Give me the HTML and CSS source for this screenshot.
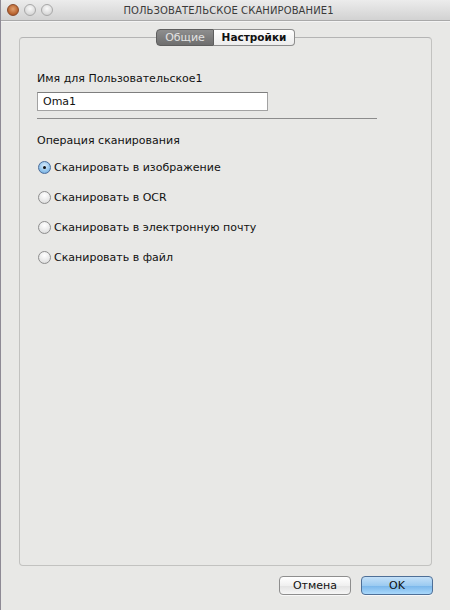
FILE: index.html
```html
<!DOCTYPE html>
<html lang="ru">
<head>
  <meta charset="UTF-8">
  <title>ПОЛЬЗОВАТЕЛЬСКОЕ СКАНИРОВАНИЕ1</title>
  <link rel="stylesheet" href="styles.css">
</head>
<body>
  <div class="window">
    <div class="titlebar">
      <div class="lights">
        <span class="light close"></span>
        <span class="light"></span>
        <span class="light"></span>
      </div>
      <div class="title">ПОЛЬЗОВАТЕЛЬСКОЕ СКАНИРОВАНИЕ1</div>
    </div>

    <div class="content">
      <div class="tabs">
        <span class="tab active">Общие</span>
        <span class="tab">Настройки</span>
      </div>

      <div class="panel">
        <div class="label">Имя для Пользовательское1</div>
        <div class="field">Oma1</div>
        <div class="sep"></div>

        <div class="label group">Операция сканирования</div>
        <div class="radios">
          <div class="radio-row"><span class="radio checked"></span>Сканировать в изображение</div>
          <div class="radio-row"><span class="radio"></span>Сканировать в OCR</div>
          <div class="radio-row"><span class="radio"></span>Сканировать в электронную почту</div>
          <div class="radio-row"><span class="radio"></span>Сканировать в файл</div>
        </div>
      </div>

      <div class="buttons">
        <button class="btn">Отмена</button>
        <button class="btn primary">OK</button>
      </div>
    </div>
  </div>
</body>
</html>
```

FILE: styles.css
```css
html, body {
  margin: 0;
  padding: 0;
}
body {
  font-family: "DejaVu Sans", Verdana, sans-serif;
  font-size: 11px;
  color: #111;
  background: #e8e8e6;
}
.window {
  width: 450px;
  height: 610px;
  box-sizing: border-box;
  border-left: 1px solid #8e8a95;
  background: #e8e8e6;
  display: flex;
  flex-direction: column;
}
.titlebar {
  height: 20px;
  flex: none;
  display: flex;
  align-items: center;
  background: linear-gradient(#ececec, #d2d2d2);
  border-bottom: 1px solid #a9a9a9;
  box-shadow: 0 1px 0 #f4f4f4;
}
.lights {
  display: flex;
  gap: 5px;
  padding-left: 6px;
  width: 100px;
}
.light {
  width: 12px;
  height: 12px;
  border-radius: 50%;
  box-sizing: border-box;
  border: 1px solid #a8a8a8;
  background: radial-gradient(circle at 50% 35%, #fafafa, #d8d8d8 70%, #c4c4c4);
}
.light.close {
  border-color: #8a4a2a;
  background: radial-gradient(circle at 50% 40%, #e0a070, #b8632f 65%, #8e4320);
}
.title {
  flex: 1;
  text-align: center;
  margin-left: -106px;
  padding-left: 6px;
  font-size: 10px;
  color: #3a3a3a;
  letter-spacing: 0.1px;
}
.content {
  flex: 1;
  display: flex;
  flex-direction: column;
  padding: 8px 17px 0 17px;
}
.tabs {
  display: flex;
  justify-content: center;
  margin-bottom: -9px;
  position: relative;
  z-index: 1;
}
.tab {
  height: 17px;
  line-height: 15px;
  box-sizing: border-box;
  border: 1px solid #8d8d8d;
  background: linear-gradient(#ffffff, #ececec);
  font-weight: bold;
  font-size: 10.5px;
  color: #111;
  text-align: center;
}
.tab:first-child {
  border-radius: 4px 0 0 4px;
}
.tab:last-child {
  border-radius: 0 4px 4px 0;
  border-left: none;
  width: 81px;
}
.tab.active {
  background: linear-gradient(#8e8e8e, #6e6e6e);
  border-color: #5e5e5e;
  color: #e2e2e2;
  font-weight: normal;
  font-size: 11px;
  width: 58px;
}
.panel {
  height: 529px;
  box-sizing: border-box;
  margin-left: 1px;
  margin-right: 1px;
  border: 1px solid #c2c2c0;
  border-top-color: #b4b4b4;
  border-radius: 4px;
  padding: 34px 17px 0 17px;
}
.label {
  line-height: 14px;
}
.field {
  margin-top: 6px;
  width: 231px;
  height: 19px;
  box-sizing: border-box;
  border: 1px solid #a2a2a2;
  border-top-color: #7e7e7e;
  background: #fff;
  padding-left: 5px;
  line-height: 17px;
}
.sep {
  margin-top: 7px;
  width: 340px;
  height: 1px;
  background: #8c8c8c;
}
.label.group {
  margin-top: 15px;
}
.radios {
  margin-top: 12px;
  display: flex;
  flex-direction: column;
  gap: 16px;
}
.radio-row {
  height: 14px;
  display: flex;
  align-items: center;
  margin-left: 1px;
}
.radio {
  width: 13px;
  height: 13px;
  box-sizing: border-box;
  border-radius: 50%;
  border: 1px solid #8e8e8e;
  background: radial-gradient(circle at 50% 30%, #ffffff, #e4e4e4 70%, #cfcfcf);
  margin-right: 3px;
  position: relative;
}
.radio.checked {
  border-color: #4a6c9a;
  background: radial-gradient(circle at 50% 35%, #d8ecfb, #8cbfe9 65%, #5e9ad6);
}
.radio.checked::after {
  content: "";
  position: absolute;
  left: 4px;
  top: 4px;
  width: 3px;
  height: 3px;
  border-radius: 50%;
  background: #111;
}
.buttons {
  display: flex;
  justify-content: flex-end;
  gap: 10px;
  margin-top: 10px;
}
.btn {
  width: 72px;
  height: 19px;
  padding: 0;
  font-family: inherit;
  font-size: 11px;
  color: #111;
  border: 1px solid #8e8e8e;
  border-radius: 4px;
  background: linear-gradient(#ffffff, #f0f0f0 50%, #e2e2e2 51%, #f6f6f6);
  box-shadow: 0 1px 0 #f8f8f8;
}
.btn.primary {
  border-color: #4e6f97;
  background: linear-gradient(#c4e0f8, #9ccbf1 50%, #78b5ea 51%, #a9d8fb);
}
```
